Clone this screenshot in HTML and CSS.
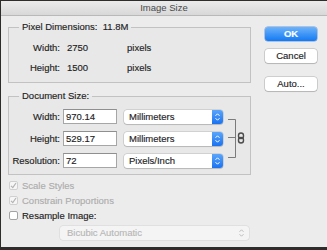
FILE: index.html
```html
<!DOCTYPE html>
<html lang="en">
<head>
    <meta charset="UTF-8">
    <title>Image Size</title>
    <link rel="stylesheet" href="styles.css">
</head>
<body>
    <div class="window">
        <div class="titlebar">Image Size</div>

        <div class="dialog">
            <div class="main">
                <fieldset class="group pixel-dims">
                    <legend>Pixel Dimensions:&nbsp; 11.8M</legend>
                    <div class="px-grid">
                        <span class="lbl">Width:</span>
                        <span>2750</span>
                        <span>pixels</span>
                        <span class="lbl">Height:</span>
                        <span>1500</span>
                        <span>pixels</span>
                    </div>
                </fieldset>

                <fieldset class="group doc-size">
                    <legend>Document Size:</legend>
                    <div class="doc-grid">
                        <span class="lbl">Width:</span>
                        <div class="field">970.14</div>
                        <div class="select">
                            <span class="select-text">Millimeters</span>
                            <span class="stepper">
                                <svg width="7" height="10" viewBox="0 0 7 10"><path d="M1.5 3.8 L3.5 1.8 L5.5 3.8 M1.5 6.2 L3.5 8.2 L5.5 6.2" fill="none" stroke="#fff" stroke-width="1"/></svg>
                            </span>
                        </div>
                        <div class="link">
                            <svg width="18" height="40" viewBox="0 0 18 40">
                                <path d="M0 0.5 H7.5 V38.5 H0 M0 18.5 H7.5" fill="none" stroke="#7b7b7b" stroke-width="1"/>
                                <rect x="10.5" y="14" width="5" height="5.5" rx="2.5" fill="none" stroke="#4d4d4d" stroke-width="1.4"/>
                                <rect x="10.5" y="18.5" width="5" height="5.5" rx="2.5" fill="none" stroke="#4d4d4d" stroke-width="1.4"/>
                            </svg>
                        </div>

                        <span class="lbl">Height:</span>
                        <div class="field">529.17</div>
                        <div class="select">
                            <span class="select-text">Millimeters</span>
                            <span class="stepper">
                                <svg width="7" height="10" viewBox="0 0 7 10"><path d="M1.5 3.8 L3.5 1.8 L5.5 3.8 M1.5 6.2 L3.5 8.2 L5.5 6.2" fill="none" stroke="#fff" stroke-width="1"/></svg>
                            </span>
                        </div>

                        <span class="lbl">Resolution:</span>
                        <div class="field">72</div>
                        <div class="select">
                            <span class="select-text">Pixels/Inch</span>
                            <span class="stepper">
                                <svg width="7" height="10" viewBox="0 0 7 10"><path d="M1.5 3.8 L3.5 1.8 L5.5 3.8 M1.5 6.2 L3.5 8.2 L5.5 6.2" fill="none" stroke="#fff" stroke-width="1"/></svg>
                            </span>
                        </div>
                    </div>
                </fieldset>

                <div class="options">
                    <label class="check disabled">
                        <span class="box"><svg width="7" height="7" viewBox="0 0 7 7"><path d="M1 3.8 L2.8 5.6 L6 1" fill="none" stroke="#b4b4b4" stroke-width="1.2"/></svg></span>
                        Scale Styles
                    </label>
                    <label class="check disabled">
                        <span class="box"><svg width="7" height="7" viewBox="0 0 7 7"><path d="M1 3.8 L2.8 5.6 L6 1" fill="none" stroke="#b4b4b4" stroke-width="1.2"/></svg></span>
                        Constrain Proportions
                    </label>
                    <label class="check">
                        <span class="box"></span>
                        Resample Image:
                    </label>
                    <div class="select select-disabled">
                        <span class="select-text">Bicubic Automatic</span>
                        <span class="stepper">
                            <svg width="7" height="10" viewBox="0 0 7 10"><path d="M1.5 3.8 L3.5 1.8 L5.5 3.8 M1.5 6.2 L3.5 8.2 L5.5 6.2" fill="none" stroke="#bdbdbd" stroke-width="1"/></svg>
                        </span>
                    </div>
                </div>
            </div>

            <div class="buttons">
                <button class="btn btn-primary">OK</button>
                <button class="btn">Cancel</button>
                <button class="btn btn-auto">Auto...</button>
            </div>
        </div>
    </div>
</body>
</html>
```

FILE: styles.css
```css
* {
    margin: 0;
    padding: 0;
    box-sizing: border-box;
}

body {
    font-family: "Liberation Sans", Arial, sans-serif;
    font-size: 9.5px;
    line-height: 12px;
    color: #1e1e1e;
    background: #2e2d2c;
    padding: 1px 0 0 1px;
    -webkit-text-stroke: 0.15px;
}

.window {
    width: 326px;
    height: 246px;
    background: #ececec;
    overflow: hidden;
}

.titlebar {
    height: 15px;
    line-height: 14px;
    text-align: center;
    color: #4a4a4a;
    background: linear-gradient(#ebebeb, #d8d8d8);
    border-bottom: 1px solid #b9b9b9;
    -webkit-text-stroke: 0;
}

.dialog {
    display: flex;
    gap: 14px;
    padding: 5px 10px 0 7px;
}

.main {
    width: 244px;
}

/* group boxes */
.group {
    border: 1px solid #c2c2c2;
    background: rgba(0, 0, 0, 0.015);
}

.group legend {
    margin-left: 10px;
    padding: 0 3px;
}

.pixel-dims {
    padding: 9px 0 8px;
}

.px-grid {
    display: grid;
    grid-template-columns: 51px 53px auto;
    column-gap: 7px;
    row-gap: 8px;
}

.lbl {
    text-align: right;
}

.doc-size {
    margin-top: 7px;
    padding: 7px 0 6px;
}

.doc-grid {
    display: grid;
    grid-template-columns: 51px 54px 99px 18px;
    grid-template-rows: 15px 15px 15px;
    column-gap: 3px;
    row-gap: 7px;
    align-items: center;
}

.doc-grid .select {
    margin-left: 4px;
    margin-right: -4px;
}

.field {
    height: 15px;
    line-height: 13px;
    padding-left: 2px;
    background: #fff;
    border: 1px solid #a6a6a6;
    border-top-color: #8f8f8f;
}

.link {
    grid-column: 4;
    grid-row: 1 / 4;
    margin-left: 6px;
    padding-top: 10px;
    align-self: start;
}

/* popup menus */
.select {
    display: flex;
    align-items: center;
    height: 14px;
    background: #fff;
    border-radius: 3px;
    box-shadow: 0 0 0 0.5px rgba(0, 0, 0, 0.2), 0 1px 1px rgba(0, 0, 0, 0.12);
}

.select-text {
    flex: 1;
    padding-left: 5px;
    white-space: nowrap;
    overflow: hidden;
}

.stepper {
    width: 11px;
    height: 14px;
    display: flex;
    align-items: center;
    justify-content: center;
    border-radius: 0 3px 3px 0;
    background: linear-gradient(#5aa6fb, #1a72f0);
}

.select-disabled {
    width: 189px;
    margin: 3px 0 0 51px;
    background: #f4f4f4;
    color: #b7b7b7;
    box-shadow: 0 0 0 0.5px rgba(0, 0, 0, 0.1);
}

.select-disabled .select-text {
    padding-left: 7px;
}

.select-disabled .stepper {
    background: none;
    margin-right: 2px;
}

/* checkboxes */
.options {
    padding: 3px 0 0 1px;
}

.check {
    display: flex;
    align-items: center;
    gap: 4px;
    height: 15px;
}

.check .box {
    width: 9px;
    height: 9px;
    display: flex;
    align-items: center;
    justify-content: center;
    background: #fff;
    border: 1px solid #a3a3a3;
    border-radius: 2px;
}

.check.disabled {
    color: #adadad;
}

.check.disabled .box {
    background: #f6f6f6;
    border-color: #d0d0d0;
}

/* buttons */
.buttons {
    display: flex;
    flex-direction: column;
    padding-top: 6px;
}

.btn {
    width: 52px;
    height: 14px;
    font: inherit;
    line-height: 12px;
    color: #1e1e1e;
    background: #fff;
    border: none;
    border-radius: 3px;
    box-shadow: 0 0 0 0.5px rgba(0, 0, 0, 0.25), 0 1px 1px rgba(0, 0, 0, 0.12);
    margin-bottom: 8px;
}

.btn-primary {
    color: #fff;
    font-weight: bold;
    background: linear-gradient(#6cb3fa, #1479f3);
    box-shadow: 0 0 0 0.5px rgba(0, 60, 170, 0.5);
}

.btn-auto {
    margin-top: 6px;
}
```
